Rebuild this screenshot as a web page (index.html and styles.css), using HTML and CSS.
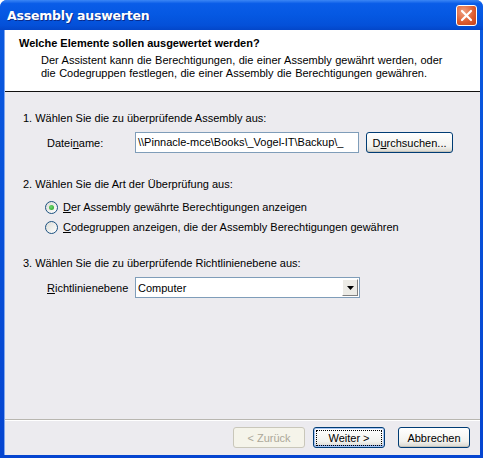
FILE: index.html
```html
<!DOCTYPE html>
<html lang="de">
<head>
    <meta charset="UTF-8">
    <title>Assembly auswerten</title>
    <link rel="stylesheet" href="styles.css">
</head>
<body>

    <div class="window">

        <div class="titlebar">
            <div class="title">Assembly auswerten</div>
            <div class="close">
                <svg width="13" height="13" viewBox="0 0 13 13">
                    <path d="M2 2 L11 11 M11 2 L2 11" stroke="#fff" stroke-width="2.2" stroke-linecap="round"/>
                </svg>
            </div>
        </div>

        <div class="frame">

            <div class="header">
                <div class="heading">Welche Elemente sollen ausgewertet werden?</div>
                <div class="desc">
                    Der Assistent kann die Berechtigungen, die einer Assembly gewährt werden, oder<br>
                    die Codegruppen festlegen, die einer Assembly die Berechtigungen gewähren.
                </div>
            </div>

            <div class="content">

                <div class="step">1. Wählen Sie die zu überprüfende Assembly aus:</div>
                <div class="row">
                    <div class="label">Datei<u>n</u>ame:</div>
                    <div class="textbox">\\Pinnacle-mce\Books\_Vogel-IT\Backup\_</div>
                    <div class="btn browse">D<u>u</u>rchsuchen...</div>
                </div>

                <div class="step step2">2. Wählen Sie die Art der Überprüfung aus:</div>
                <div class="radios">
                    <div class="radio-row">
                        <span class="radio checked"></span>
                        <span><u>D</u>er Assembly gewährte Berechtigungen anzeigen</span>
                    </div>
                    <div class="radio-row">
                        <span class="radio"></span>
                        <span><u>C</u>odegruppen anzeigen, die der Assembly Berechtigungen gewähren</span>
                    </div>
                </div>

                <div class="step step3">3. Wählen Sie die zu überprüfende Richtlinienebene aus:</div>
                <div class="row">
                    <div class="label"><u>R</u>ichtlinienebene</div>
                    <div class="select">
                        <span class="value">Computer</span>
                        <span class="arrow">
                            <svg width="7" height="4" viewBox="0 0 7 4"><path d="M0 0 H7 L3.5 4 Z" fill="#000"/></svg>
                        </span>
                    </div>
                </div>

            </div>

            <div class="footer">
                <div class="btn disabled">&lt; Zurück</div>
                <div class="btn default"><span class="focus">Weiter &gt;</span></div>
                <div class="btn cancel">Abbrechen</div>
            </div>

        </div>

    </div>

</body>
</html>
```

FILE: styles.css
```css
body{
    margin: 0px;
    width: 483px;
    height: 458px;
    overflow: hidden;
    font-family: 'Liberation Sans', Arial, sans-serif;
    font-size: 11px;
    color: #000;
}

.window{
    height: 458px;
    display: flex;
    flex-direction: column;
    background: linear-gradient(#0a5ae0, #0545d0);
    border-radius: 7px 7px 0 0;
}

.titlebar{
    height: 30px;
    display: flex;
    align-items: center;
    justify-content: space-between;
    padding: 0 6px 0 7px;
    border-radius: 7px 7px 0 0;
    background: linear-gradient(#3b86f5 0%, #0a5de8 12%, #0558e2 50%, #0450d8 85%, #0346c8 100%);
}

.title{
    color: white;
    font-family: 'DejaVu Sans', sans-serif;
    font-weight: bold;
    font-size: 12.5px;
    letter-spacing: -0.2px;
    text-shadow: 1px 1px 0 #0a2a8a;
}

.close{
    width: 19px;
    height: 19px;
    display: flex;
    align-items: center;
    justify-content: center;
    border: 1px solid #fff;
    border-radius: 3px;
    background: radial-gradient(circle at 35% 30%, #f0a080, #dd5a2c 60%, #c2401a);
}

.frame{
    flex: 1;
    display: flex;
    flex-direction: column;
    margin: 0 3px 3px 4px;
    background: #ecebef;
    border-left: 1px solid #7fa6ee;
}

.header{
    height: 62px;
    background: white;
    border-bottom: 1px solid #111;
    padding: 7px 0 0 14px;
    box-sizing: border-box;
}

.heading{
    font-weight: bold;
    line-height: 13px;
    font-size: 11px;
}

.desc{
    margin: 4px 0 0 22px;
    line-height: 13px;
    word-spacing: 0.4px;
}

.content{
    flex: 1;
    padding: 19px 0 0 18px;
}

.step{
    line-height: 14px;
}

.step2{
    margin-top: 24px;
}

.step3{
    margin-top: 19px;
}

.row{
    display: flex;
    align-items: center;
    margin-top: 7px;
    padding-left: 24px;
}

.label{
    width: 88px;
}

.textbox{
    width: 220px;
    height: 19px;
    line-height: 19px;
    border: 1px solid #7f9db9;
    background: white;
    padding-left: 2px;
    box-sizing: content-box;
    white-space: nowrap;
    overflow: hidden;
}

.btn{
    height: 19px;
    display: flex;
    align-items: center;
    justify-content: center;
    border: 1px solid #003c74;
    border-radius: 3px;
    background: linear-gradient(#ffffff, #f2f2ee 70%, #d8d6ce);
    box-shadow: inset 0 -1px 0 #c5c3bb;
}

.browse{
    width: 85px;
    margin-left: 7px;
}

.radios{
    margin-top: 6px;
    padding-left: 22px;
}

.radio-row{
    height: 20px;
    display: flex;
    align-items: center;
}

.radio{
    width: 11px;
    height: 11px;
    border: 1px solid #1c5180;
    border-radius: 50%;
    background: linear-gradient(135deg, #dcdcd6, #ffffff);
    margin-right: 5px;
    display: flex;
    align-items: center;
    justify-content: center;
}

.checked::after{
    content: "";
    width: 5px;
    height: 5px;
    border-radius: 50%;
    background: radial-gradient(circle at 40% 40%, #6fd66f, #21a121);
}

.select{
    width: 220px;
    height: 19px;
    border: 1px solid #7f9db9;
    background: white;
    display: flex;
    align-items: center;
    justify-content: space-between;
    padding: 0 1px 0 2px;
}

.arrow{
    width: 16px;
    height: 17px;
    display: flex;
    align-items: center;
    justify-content: center;
    background: #ecebe6;
    border-top: 1px solid #fff;
    border-left: 1px solid #fff;
    border-right: 1px solid #808080;
    border-bottom: 1px solid #808080;
    box-sizing: border-box;
}

.footer{
    height: 36px;
    box-sizing: border-box;
    border-top: 1px solid #b8b6b0;
    box-shadow: inset 0 1px 0 #fff;
    display: flex;
    justify-content: flex-end;
    padding: 7px 10px 0 0;
    gap: 8px;
}

.footer .btn{
    width: 70px;
}

.disabled{
    color: #aca899;
    border-color: #c9c7ba;
    background: #f5f4ea;
    box-shadow: none;
}

.default{
    border-color: #003c74;
    box-shadow: inset 0 0 0 1px #a8c6f4, inset 0 -2px 0 #7ea2e8;
}

.focus{
    border: 1px dotted #000;
    padding: 1px 11px;
    line-height: 12px;
}

.cancel{
    margin-left: 5px;
}
```
